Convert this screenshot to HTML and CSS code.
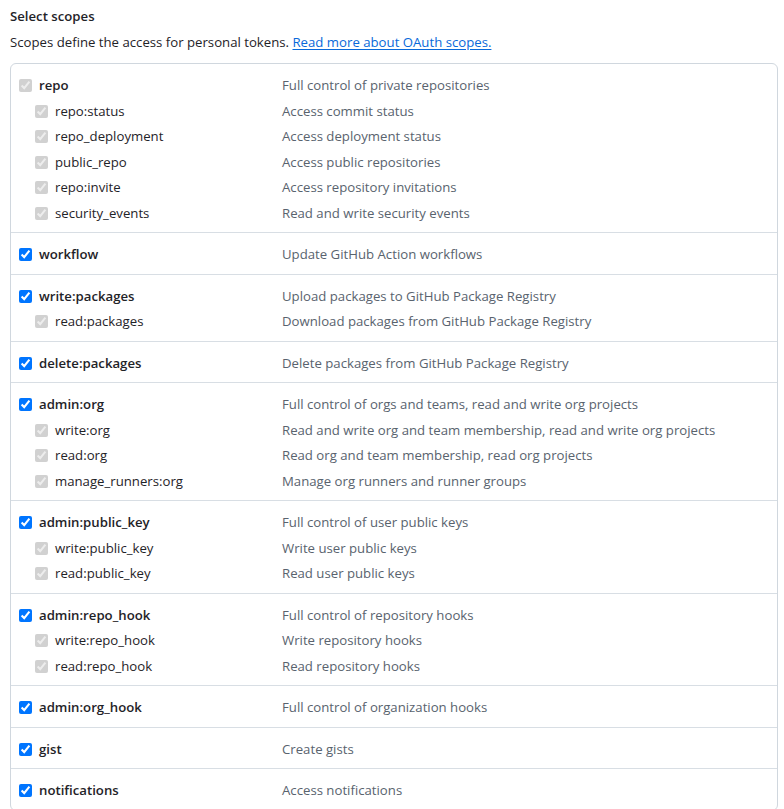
FILE: index.html
```html
<!DOCTYPE html>
<html lang="en">
<head>
<meta charset="utf-8">
<title>Select scopes</title>
<link rel="stylesheet" href="styles.css">
</head>
<body>
<h3 class="title">Select scopes</h3>
<p class="note">Scopes define the access for personal tokens. <a class="link" href="#">Read more about OAuth scopes.</a></p>
<div class="scopes">
  <div class="group">
    <label class="row parent"><span class="name"><input type="checkbox" checked disabled>repo</span><span class="desc">Full control of private repositories</span></label>
    <label class="row child"><span class="name"><input type="checkbox" checked disabled>repo:status</span><span class="desc">Access commit status</span></label>
    <label class="row child"><span class="name"><input type="checkbox" checked disabled>repo_deployment</span><span class="desc">Access deployment status</span></label>
    <label class="row child"><span class="name"><input type="checkbox" checked disabled>public_repo</span><span class="desc">Access public repositories</span></label>
    <label class="row child"><span class="name"><input type="checkbox" checked disabled>repo:invite</span><span class="desc">Access repository invitations</span></label>
    <label class="row child"><span class="name"><input type="checkbox" checked disabled>security_events</span><span class="desc">Read and write security events</span></label>
  </div>
  <div class="group">
    <label class="row parent"><span class="name"><input type="checkbox" checked>workflow</span><span class="desc">Update GitHub Action workflows</span></label>
  </div>
  <div class="group">
    <label class="row parent"><span class="name"><input type="checkbox" checked>write:packages</span><span class="desc">Upload packages to GitHub Package Registry</span></label>
    <label class="row child"><span class="name"><input type="checkbox" checked disabled>read:packages</span><span class="desc">Download packages from GitHub Package Registry</span></label>
  </div>
  <div class="group">
    <label class="row parent"><span class="name"><input type="checkbox" checked>delete:packages</span><span class="desc">Delete packages from GitHub Package Registry</span></label>
  </div>
  <div class="group">
    <label class="row parent"><span class="name"><input type="checkbox" checked>admin:org</span><span class="desc">Full control of orgs and teams, read and write org projects</span></label>
    <label class="row child"><span class="name"><input type="checkbox" checked disabled>write:org</span><span class="desc">Read and write org and team membership, read and write org projects</span></label>
    <label class="row child"><span class="name"><input type="checkbox" checked disabled>read:org</span><span class="desc">Read org and team membership, read org projects</span></label>
    <label class="row child"><span class="name"><input type="checkbox" checked disabled>manage_runners:org</span><span class="desc">Manage org runners and runner groups</span></label>
  </div>
  <div class="group">
    <label class="row parent"><span class="name"><input type="checkbox" checked>admin:public_key</span><span class="desc">Full control of user public keys</span></label>
    <label class="row child"><span class="name"><input type="checkbox" checked disabled>write:public_key</span><span class="desc">Write user public keys</span></label>
    <label class="row child"><span class="name"><input type="checkbox" checked disabled>read:public_key</span><span class="desc">Read user public keys</span></label>
  </div>
  <div class="group">
    <label class="row parent"><span class="name"><input type="checkbox" checked>admin:repo_hook</span><span class="desc">Full control of repository hooks</span></label>
    <label class="row child"><span class="name"><input type="checkbox" checked disabled>write:repo_hook</span><span class="desc">Write repository hooks</span></label>
    <label class="row child"><span class="name"><input type="checkbox" checked disabled>read:repo_hook</span><span class="desc">Read repository hooks</span></label>
  </div>
  <div class="group">
    <label class="row parent"><span class="name"><input type="checkbox" checked>admin:org_hook</span><span class="desc">Full control of organization hooks</span></label>
  </div>
  <div class="group">
    <label class="row parent"><span class="name"><input type="checkbox" checked>gist</span><span class="desc">Create gists</span></label>
  </div>
  <div class="group">
    <label class="row parent"><span class="name"><input type="checkbox" checked>notifications</span><span class="desc">Access notifications</span></label>
  </div>
</div>
</body>
</html>
```

FILE: styles.css
```css
html, body {
  margin: 0;
  background: #ffffff;
}
body {
  padding: 6px 6px 0 10px;
  font-family: "Open Sans", "Noto Sans", sans-serif;
  font-size: 13.2px;
  color: #1f2328;
}
.title {
  margin: 0;
  font-size: 13.2px;
  line-height: 21px;
  font-weight: 600;
}
.note {
  margin: 5px 0 0;
  line-height: 21px;
  color: #1f2328;
}
.link {
  color: #0969da;
  text-decoration: underline;
  text-underline-offset: 2px;
}
.scopes {
  margin-top: 10px;
  border: 1px solid #d0d7de;
  border-radius: 6px;
  overflow: hidden;
}
.group {
  padding: 9px 0 6px 4px;
}
.group + .group {
  border-top: 1px solid #d8dee4;
}
.row {
  display: grid;
  grid-template-columns: 267px 1fr;
  align-items: center;
  height: 25.5px;
  line-height: 21px;
}
.name {
  display: flex;
  align-items: center;
  white-space: nowrap;
}
.name input {
  width: 13px;
  height: 13px;
  margin: 0 7px 0 4px;
  flex: none;
}
.child .name {
  padding-left: 16px;
}
.parent .name {
  font-weight: 600;
}
.desc {
  color: #59636e;
  white-space: nowrap;
}
```
